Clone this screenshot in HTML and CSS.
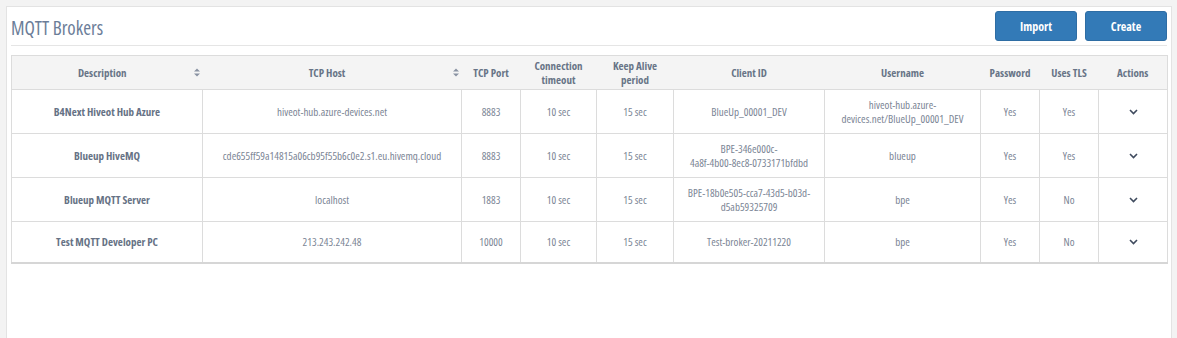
FILE: index.html
```html
<!DOCTYPE html>
<html>
<head>
<meta charset="utf-8">
<title>MQTT Brokers</title>
<link rel="stylesheet" href="styles.css">
</head>
<body>
<div class="panel">
  <div class="panel-head">
    <h1 class="title">MQTT Brokers</h1>
    <div class="actions">
      <button class="btn">Import</button>
      <button class="btn">Create</button>
    </div>
  </div>
  <table class="grid">
    <colgroup>
      <col class="c1"><col class="c2"><col class="c3"><col class="c4"><col class="c5">
      <col class="c6"><col class="c7"><col class="c8"><col class="c9"><col class="c10">
    </colgroup>
    <thead>
      <tr>
        <th class="sortable">Description<svg class="sort" width="6" height="9" viewBox="0 0 6 9"><path d="M0 3.5 L3 0.5 L6 3.5Z M0 5.5 L3 8.5 L6 5.5Z" fill="#8a93a3"/></svg></th>
        <th class="sortable">TCP Host<svg class="sort" width="6" height="9" viewBox="0 0 6 9"><path d="M0 3.5 L3 0.5 L6 3.5Z M0 5.5 L3 8.5 L6 5.5Z" fill="#8a93a3"/></svg></th>
        <th>TCP Port</th>
        <th>Connection<br>timeout</th>
        <th>Keep Alive<br>period</th>
        <th>Client ID</th>
        <th>Username</th>
        <th>Password</th>
        <th>Uses TLS</th>
        <th>Actions</th>
      </tr>
    </thead>
    <tbody>
      <tr>
        <td class="name">B4Next Hiveot Hub Azure</td>
        <td>hiveot-hub.azure-devices.net</td>
        <td>8883</td>
        <td>10 sec</td>
        <td>15 sec</td>
        <td>BlueUp_00001_DEV</td>
        <td>hiveot-hub.azure-<br>devices.net/BlueUp_00001_DEV</td>
        <td>Yes</td>
        <td>Yes</td>
        <td><svg class="chev" width="9" height="6" viewBox="0 0 9 6"><path d="M1 1 L4.5 4.5 L8 1" fill="none" stroke="#3f4b5e" stroke-width="1.6"/></svg></td>
      </tr>
      <tr>
        <td class="name">Blueup HiveMQ</td>
        <td>cde655ff59a14815a06cb95f55b6c0e2.s1.eu.hivemq.cloud</td>
        <td>8883</td>
        <td>10 sec</td>
        <td>15 sec</td>
        <td>BPE-346e000c-<br>4a8f-4b00-8ec8-0733171bfdbd</td>
        <td>blueup</td>
        <td>Yes</td>
        <td>Yes</td>
        <td><svg class="chev" width="9" height="6" viewBox="0 0 9 6"><path d="M1 1 L4.5 4.5 L8 1" fill="none" stroke="#3f4b5e" stroke-width="1.6"/></svg></td>
      </tr>
      <tr>
        <td class="name">Blueup MQTT Server</td>
        <td>localhost</td>
        <td>1883</td>
        <td>10 sec</td>
        <td>15 sec</td>
        <td>BPE-18b0e505-cca7-43d5-b03d-<br>d5ab59325709</td>
        <td>bpe</td>
        <td>Yes</td>
        <td>No</td>
        <td><svg class="chev" width="9" height="6" viewBox="0 0 9 6"><path d="M1 1 L4.5 4.5 L8 1" fill="none" stroke="#3f4b5e" stroke-width="1.6"/></svg></td>
      </tr>
      <tr class="last">
        <td class="name">Test MQTT Developer PC</td>
        <td>213.243.242.48</td>
        <td>10000</td>
        <td>10 sec</td>
        <td>15 sec</td>
        <td>Test-broker-20211220</td>
        <td>bpe</td>
        <td>Yes</td>
        <td>No</td>
        <td><svg class="chev" width="9" height="6" viewBox="0 0 9 6"><path d="M1 1 L4.5 4.5 L8 1" fill="none" stroke="#3f4b5e" stroke-width="1.6"/></svg></td>
      </tr>
    </tbody>
  </table>
</div>
</body>
</html>
```

FILE: styles.css
```css
html, body {
  margin: 0;
  padding: 0;
  height: 100%;
}
body {
  background: #f3f3f3;
  font-family: "Liberation Sans Narrow", "Open Sans", sans-serif;
  font-stretch: condensed;
  font-size: 11px;
  color: #7a8494;
  overflow: hidden;
}
.panel {
  margin: 6px 5px 0 6px;
  background: #fff;
  border: 1px solid #e3e3e3;
  border-bottom: none;
  padding: 0 4px;
  min-height: 340px;
  box-sizing: border-box;
}
.panel-head {
  display: flex;
  align-items: flex-start;
  justify-content: space-between;
  border-bottom: 1px solid #e5e5e5;
  height: 38px;
  margin-bottom: 9px;
}
.title {
  margin: 10px 0 0 0;
  font-size: 19px;
  font-weight: normal;
  line-height: 22px;
  color: #6b7d98;
}
.actions {
  display: flex;
  gap: 8px;
  padding-top: 4px;
}
.btn {
  width: 82px;
  height: 30px;
  background: #337ab7;
  border: 1px solid #2e6da4;
  border-radius: 3px;
  color: #fff;
  font-family: inherit;
  font-stretch: condensed;
  font-weight: bold;
  font-size: 12px;
  padding: 0;
}
.grid {
  width: 1156px;
  table-layout: fixed;
  border-collapse: collapse;
  border: 1px solid #dcdcdc;
  border-bottom: 2px solid #d6d6d6;
}
.c1 { width: 191px; }
.c2 { width: 259px; }
.c3 { width: 59px; }
.c4 { width: 76px; }
.c5 { width: 77px; }
.c6 { width: 151px; }
.c7 { width: 156px; }
.c8 { width: 59px; }
.c9 { width: 59px; }
.c10 { width: 69px; }
.grid th {
  background: #f4f4f4;
  color: #687487;
  font-weight: bold;
  font-size: 11px;
  line-height: 14px;
  height: 33px;
  padding: 0 4px;
  text-align: center;
  vertical-align: middle;
}
.grid th.sortable {
  position: relative;
  padding-right: 14px;
}
.sort {
  position: absolute;
  right: 3px;
  top: 12px;
}
.grid td {
  border: 1px solid #dcdcdc;
  height: 43px;
  padding: 0 4px;
  text-align: center;
  vertical-align: middle;
  line-height: 14px;
  color: #7b8595;
}
.grid tr.last td {
  height: 40px;
}
.grid td.name {
  font-weight: bold;
  color: #667285;
}
.chev {
  display: block;
  margin: 0 auto;
}
```
